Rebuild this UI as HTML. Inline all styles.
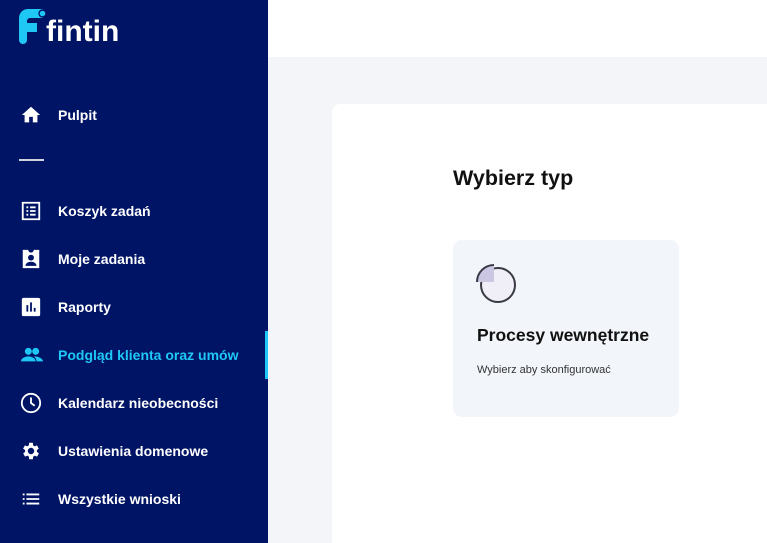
<!DOCTYPE html>
<html><head><meta charset="utf-8"><style>
*{margin:0;padding:0;box-sizing:border-box}
body{width:767px;height:543px;overflow:hidden;font-family:"Liberation Sans",Arial,sans-serif;background:#f4f5f9;position:relative}
.sb{position:absolute;left:0;top:0;width:268px;height:543px;background:#001466}
.logo{position:absolute;left:19px;top:9px}
.logo span{position:absolute;left:27px;top:6px;color:#fff;font-weight:bold;font-size:30px;white-space:nowrap}
.it{position:absolute;left:0;width:268px;height:48px;display:flex;align-items:center;color:#fff;font-size:14px;font-weight:bold}
.it svg{position:absolute;left:20px;top:13px}
.it b{position:absolute;left:58px}
.act{color:#1fc7f5;border-right:3px solid #1fc7f5}
.dash{position:absolute;left:19px;top:159px;width:25px;height:2px;background:#cfd3e0}
.top{position:absolute;left:268px;top:0;right:0;height:57px;background:#fff}
.panel{position:absolute;left:332px;top:104px;right:0;bottom:0;background:#fff;border-top-left-radius:8px}
h1{position:absolute;left:453px;top:166px;font-size:21.5px;font-weight:bold;color:#111}
.card{position:absolute;left:453px;top:240px;width:226px;height:177px;background:#f2f5fa;border-radius:9px}
.card h2{position:absolute;left:24px;top:85px;font-size:17.5px;font-weight:bold;color:#111}
.card p{position:absolute;left:24px;top:124px;font-size:11px;color:#333}
</style></head><body>
<div class="sb">
 <div class="logo">
  <svg width="30" height="35" viewBox="0 0 30 35"><path d="M0 9a9 9 0 0 1 9-9h15v9H11a3 3 0 0 0-3 3v2h10v9H8v8a4 4 0 0 1-8 0z" fill="#1fc7f5"/><circle cx="23.5" cy="4.5" r="4.2" fill="#001466"/><circle cx="23.5" cy="4.5" r="2.8" fill="#1fc7f5"/></svg>
  <span>fintin</span>
 </div>
 <div class="it" style="top:91px"><svg width="22" height="22" viewBox="0 0 24 24"><path d="M10 20v-6h4v6h5v-8h3L12 3 2 12h3v8z" fill="#fff"/></svg><b>Pulpit</b></div>
 <div class="dash"></div>
 <div class="it" style="top:187px"><svg width="22" height="22" viewBox="0 0 24 24"><path d="M3 3h18v18H3z" fill="none" stroke="#fff" stroke-width="2"/><path d="M7 7h2v2H7zm4 0h6v2h-6zM7 11h2v2H7zm4 0h6v2h-6zM7 15h2v2H7zm4 0h6v2h-6z" fill="#fff"/></svg><b>Koszyk zadań</b></div>
 <div class="it" style="top:235px"><svg width="22" height="22" viewBox="0 0 24 24"><path d="M3 2h6a3 3 0 0 0 6 0h6v20H3z" fill="#fff"/><circle cx="12" cy="10.5" r="3.2" fill="#001466"/><path d="M6 19.5c0-3 3-4.5 6-4.5s6 1.5 6 4.5z" fill="#001466"/></svg><b>Moje zadania</b></div>
 <div class="it" style="top:283px"><svg width="22" height="22" viewBox="0 0 24 24"><rect x="2" y="2" width="20" height="20" rx="2" fill="#fff"/><path d="M7 10h2v7H7zm4-3h2v10h-2zm4 6h2v4h-2z" fill="#001466"/></svg><b>Raporty</b></div>
 <div class="it act" style="top:331px"><svg width="24" height="22" viewBox="0 0 24 24"><circle cx="8" cy="8" r="3.8" fill="#1fc7f5"/><circle cx="16" cy="8" r="3.8" fill="#1fc7f5"/><path d="M0 19c0-3.5 4.5-5.5 8-5.5s8 2 8 5.5zm14-5.5c3.5 0 10 1.5 10 5.5h-7c0-2-1-4-3-5.5z" fill="#1fc7f5"/></svg><b>Podgląd klienta oraz umów</b></div>
 <div class="it" style="top:379px"><svg width="22" height="22" viewBox="0 0 24 24"><circle cx="12" cy="12" r="10" fill="none" stroke="#fff" stroke-width="2"/><path d="M12 6v6l4 3" fill="none" stroke="#fff" stroke-width="2"/></svg><b>Kalendarz nieobecności</b></div>
 <div class="it" style="top:427px"><svg width="22" height="22" viewBox="0 0 24 24"><path d="M19.4 13a7.5 7.5 0 0 0 0-2l2.1-1.6-2-3.5-2.5 1a7 7 0 0 0-1.7-1L15 3h-4l-.4 2.9a7 7 0 0 0-1.7 1l-2.5-1-2 3.5L6.6 11a7.5 7.5 0 0 0 0 2l-2.1 1.6 2 3.5 2.5-1a7 7 0 0 0 1.7 1L11 21h4l.4-2.9a7 7 0 0 0 1.7-1l2.5 1 2-3.5zM13 15.5a3.5 3.5 0 1 1 0-7 3.5 3.5 0 0 1 0 7z" fill="#fff" transform="translate(-1 0)"/></svg><b>Ustawienia domenowe</b></div>
 <div class="it" style="top:475px"><svg width="22" height="22" viewBox="0 0 24 24"><path d="M3 6h2v2H3zm4 0h14v2H7zM3 11h2v2H3zm4 0h14v2H7zM3 16h2v2H3zm4 0h14v2H7z" fill="#fff"/></svg><b>Wszystkie wnioski</b></div>
</div>
<div class="top"></div>
<div class="panel"></div>
<h1>Wybierz typ</h1>
<div class="card">
 <svg style="position:absolute;left:23px;top:23px" width="42" height="42" viewBox="0 0 42 42">
  <circle cx="22" cy="22" r="17" fill="#f0eff8" stroke="#3a3a44" stroke-width="2"/>
  <path d="M18 2A17 17 0 0 0 1 19h17z" fill="#cbc7e3"/>
  <path d="M1 19A17 17 0 0 1 18 2" fill="none" stroke="#3a3a44" stroke-width="2"/>
 </svg>
 <h2>Procesy wewnętrzne</h2>
 <p>Wybierz aby skonfigurować</p>
</div>
</body></html>
